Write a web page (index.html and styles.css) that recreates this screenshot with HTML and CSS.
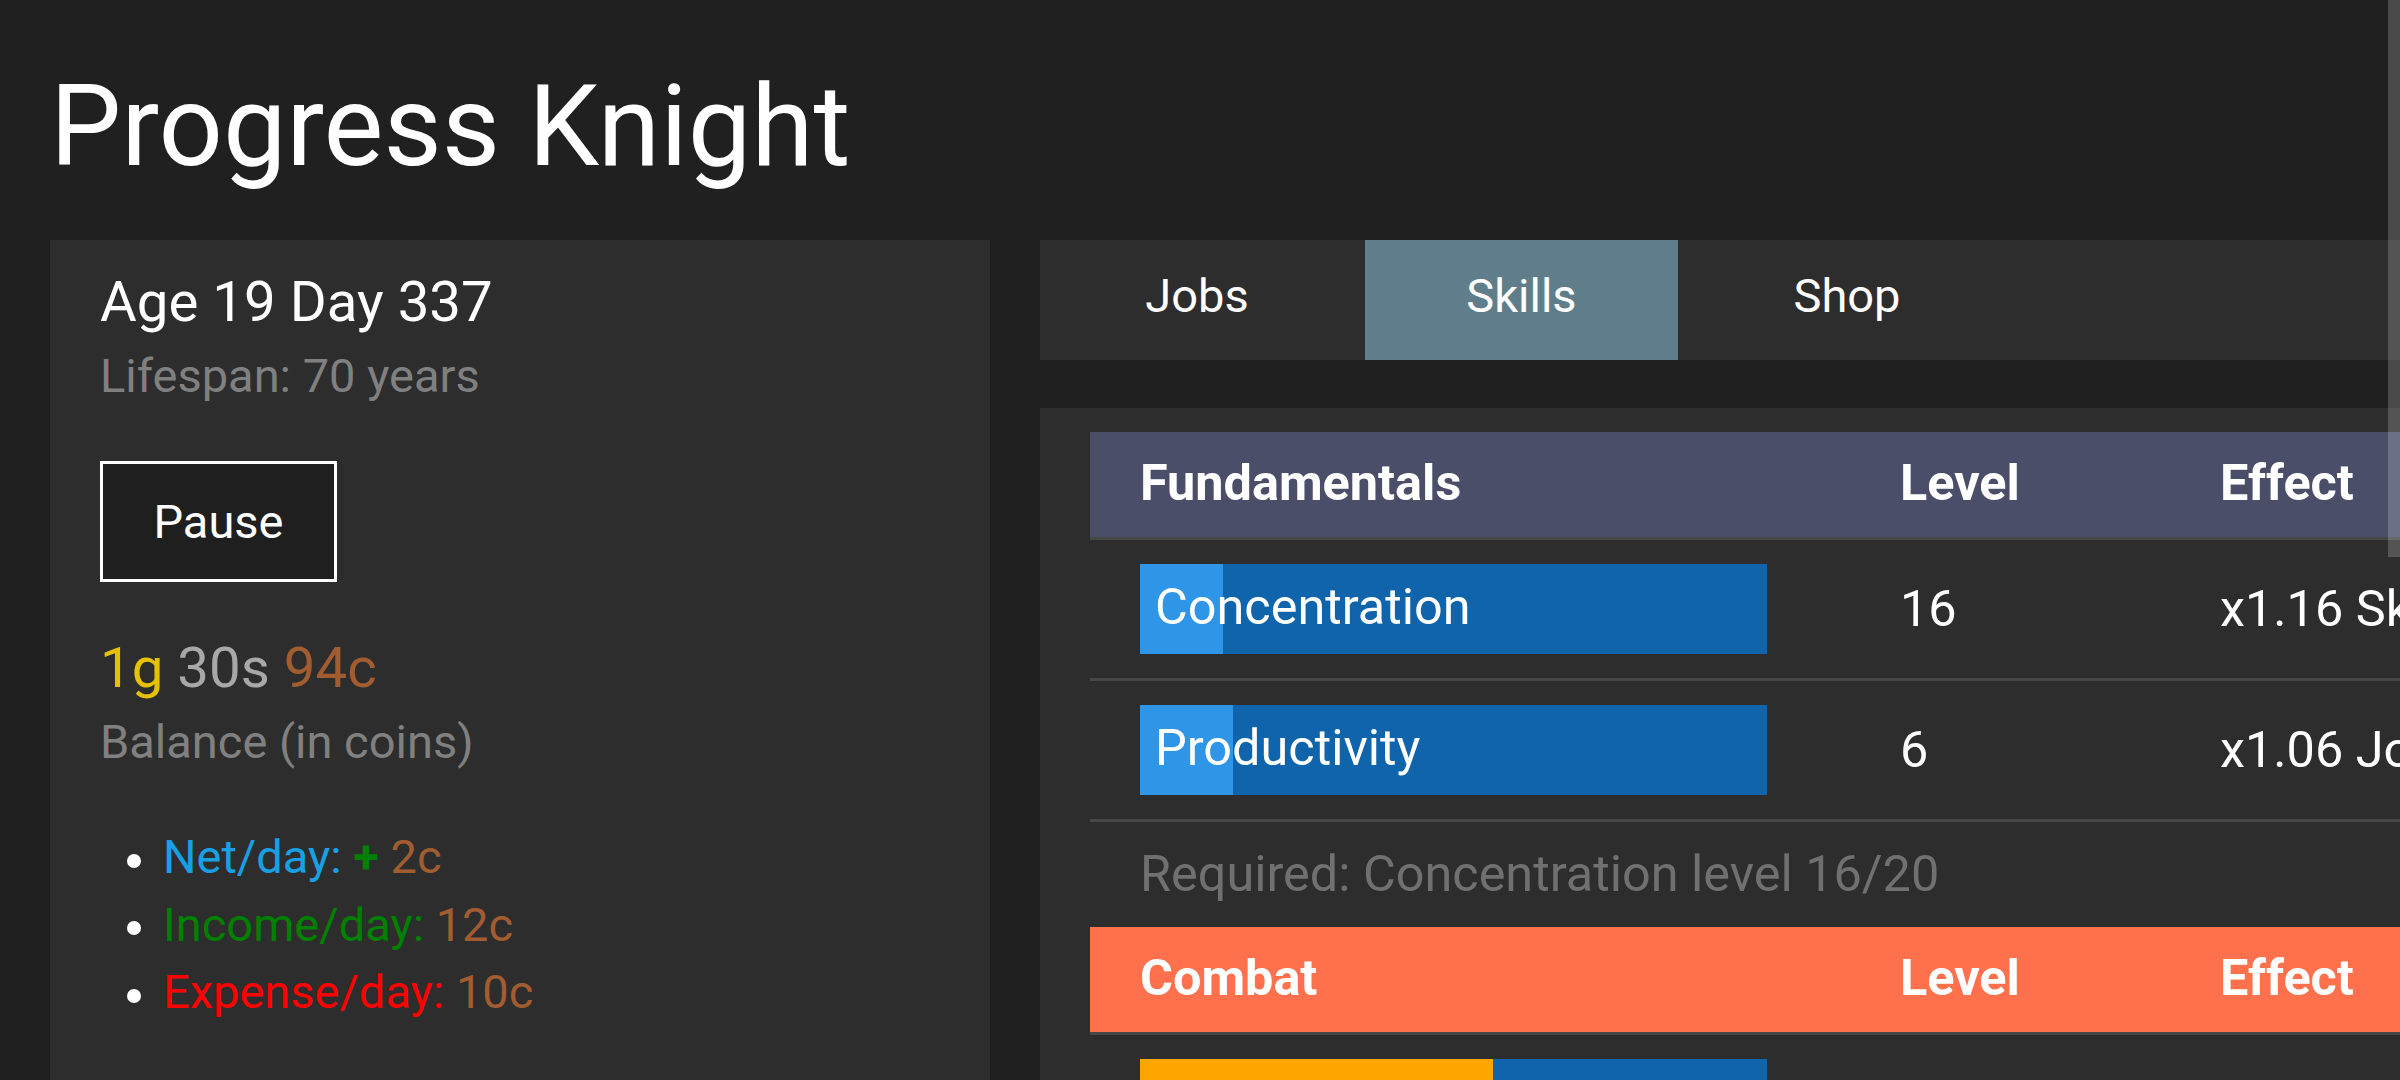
FILE: index.html
```html
<!DOCTYPE html>
<html lang="en">
<head>
<meta charset="utf-8">
<title>Progress Knight</title>
<link rel="stylesheet" href="styles.css">
</head>
<body>
<header class="title-bar"><h1 class="title">Progress Knight</h1></header>
<main class="layout">
  <aside class="sidebar">
    <div class="age">Age 19 Day 337</div>
    <div class="muted">Lifespan: 70 years</div>
    <button class="pause" type="button">Pause</button>
    <div class="coins"><span class="gold">1g</span> <span class="silver">30s</span> <span class="copper">94c</span></div>
    <div class="muted">Balance (in coins)</div>
    <ul class="money">
      <li><span class="net">Net/day: </span><span class="plus">+</span> <span class="copper">2c</span></li>
      <li><span class="income">Income/day: </span><span class="copper">12c</span></li>
      <li><span class="expense">Expense/day: </span><span class="copper">10c</span></li>
    </ul>
  </aside>
  <section class="content">
    <nav class="tabs">
      <div class="tab tab-jobs">Jobs</div>
      <div class="tab tab-skills active">Skills</div>
      <div class="tab tab-shop">Shop</div>
    </nav>
    <div class="panel">
      <div class="skill-table">
        <div class="row head fundamentals">
          <div class="cell">Fundamentals</div>
          <div class="cell">Level</div>
          <div class="cell">Effect</div>
        </div>
        <div class="row skill">
          <div class="cell"><div class="bar"><div class="fill" style="width: 13.2%"></div><div class="bar-text">Concentration</div></div></div>
          <div class="cell">16</div>
          <div class="cell">x1.16 Skill xp</div>
        </div>
        <div class="row skill">
          <div class="cell"><div class="bar"><div class="fill" style="width: 14.8%"></div><div class="bar-text">Productivity</div></div></div>
          <div class="cell">6</div>
          <div class="cell">x1.06 Job xp</div>
        </div>
        <div class="row required">
          <div class="req-text">Required: Concentration level 16/20</div>
        </div>
        <div class="row head combat">
          <div class="cell">Combat</div>
          <div class="cell">Level</div>
          <div class="cell">Effect</div>
        </div>
        <div class="row skill">
          <div class="cell"><div class="bar"><div class="fill current" style="width: 56.3%"></div><div class="bar-text">Strength</div></div></div>
          <div class="cell">28</div>
          <div class="cell">x1.28 Military pay</div>
        </div>
      </div>
    </div>
  </section>
</main>
<div class="scroll-thumb"></div>
</body>
</html>
```

FILE: styles.css
```css
html, body {
  margin: 0;
  padding: 0;
  overflow: hidden;
  background: #202020;
}

body {
  font-family: "Roboto", "Liberation Sans", sans-serif;
  font-size: 47px;
  line-height: 1.5;
  color: #ffffff;
  padding: 0 50px;
  width: 2700px;
}

.title-bar {
  padding-top: 61.6px;
  margin-bottom: 48.8px;
}

.title {
  margin: 0;
  font-size: 113px;
  font-weight: 400;
  line-height: 129.6px;
  color: #ffffff;
}

.layout {
  display: flex;
  align-items: flex-start;
  gap: 50px;
}

.sidebar {
  flex: 0 0 940px;
  box-sizing: border-box;
  background: #2d2d2d;
  padding: 23px 50px 80px;
  height: 900px;
}

.age {
  font-size: 56.4px;
  line-height: 79px;
}

.muted {
  color: #808080;
  line-height: 67.5px;
}

.pause {
  display: flex;
  align-items: center;
  justify-content: center;
  box-sizing: border-box;
  width: 237px;
  height: 121px;
  margin-top: 51.5px;
  border: 3px solid #ffffff;
  background: #1f1f1f;
  color: #ffffff;
  font-family: inherit;
  font-size: 47px;
  padding: 0;
}

.coins {
  margin-top: 47.25px;
  font-size: 56.4px;
  line-height: 79px;
}

.gold { color: #e5c100; }
.silver { color: #a8a8a8; }
.copper { color: #a15c2f; }
.net { color: #18a0e4; }
.plus { color: #008000; font-weight: 700; }
.income { color: #008000; }
.expense { color: #ff0000; }

.money {
  list-style: none;
  margin: 47.5px 0 0;
  padding: 0 0 0 27px;
}

.money li {
  line-height: 67.5px;
}

.money li::before {
  content: "";
  display: inline-block;
  width: 14px;
  height: 14px;
  border-radius: 50%;
  background: #ffffff;
  vertical-align: middle;
  margin-right: 22px;
}

.content {
  flex: 0 0 1600px;
}

.tabs {
  display: flex;
  height: 120px;
  background: #2d2d2d;
  margin-bottom: 48px;
}

.tab {
  display: flex;
  align-items: center;
  justify-content: center;
  box-sizing: border-box;
  padding-bottom: 8px;
  line-height: 52px;
}

.tab-jobs { width: 325px; padding-right: 11px; }
.tab-skills { width: 313px; }
.tab-shop { width: 338px; }

.tab.active {
  background: #607d8b;
}

.panel {
  background: #2d2d2d;
  padding: 24px 50px 0;
  height: 720px;
}

.skill-table {
  display: flex;
  flex-direction: column;
  font-size: 50.4px;
}

.row {
  display: grid;
  grid-template-columns: 760px 320px 600px;
  align-items: center;
}

.cell {
  padding-left: 50px;
  line-height: 52.7px;
  white-space: nowrap;
}

.head {
  height: 102px;
  padding-bottom: 3px;
  font-weight: 700;
  border-bottom: 3px solid #474747;
}

.fundamentals { background: #4a4e69; }
.combat { background: #ff704d; }

.skill {
  height: 138px;
  border-bottom: 3px solid #474747;
}

.bar {
  display: grid;
  width: 627px;
  height: 90px;
  background: #0f64ab;
}

.fill,
.bar-text {
  grid-area: 1 / 1;
}

.fill {
  height: 90px;
  background: #2f95e7;
}

.fill.current {
  background: #ffa500;
}

.bar-text {
  align-self: center;
  padding-left: 15px;
  padding-bottom: 4px;
  line-height: 52.7px;
}

.required {
  display: flex;
  height: 105px;
}

.req-text {
  padding-left: 50px;
  color: #707070;
  line-height: 52.7px;
}

.scroll-thumb {
  position: fixed;
  top: 0;
  right: 0;
  width: 12px;
  height: 557px;
  background: rgba(255, 255, 255, 0.19);
}
```
